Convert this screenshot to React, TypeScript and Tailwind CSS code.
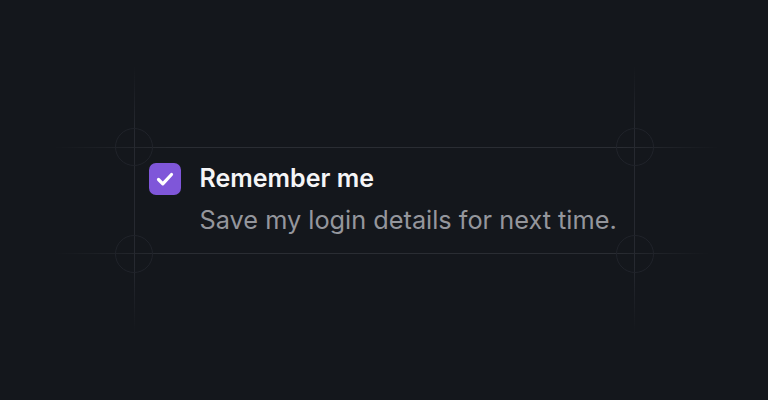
import React from "react";

export default function App() {
  return (
    <div
      className="w-[768px] h-[400px] bg-[#14171c] flex items-center justify-center overflow-hidden"
      style={{ fontFamily: "Inter, 'Noto Sans', sans-serif" }}
    >
      <div className="relative">
        {/* decorative guide lines */}
        <div className="pointer-events-none absolute left-[-80px] right-[-85px] top-0 h-px bg-[linear-gradient(to_right,transparent,#2a2d33_18%,#2a2d33_85%,transparent)]" />
        <div className="pointer-events-none absolute left-[-80px] right-[-75px] bottom-0 h-px bg-[linear-gradient(to_right,transparent,#2a2d33_18%,#2a2d33_85%,transparent)]" />
        <div className="pointer-events-none absolute top-[-82px] bottom-[-78px] left-0 w-px bg-[linear-gradient(to_bottom,transparent,#262930_25%,#262930_75%,transparent)]" />
        <div className="pointer-events-none absolute top-[-82px] bottom-[-78px] right-0 w-px bg-[linear-gradient(to_bottom,transparent,#262930_25%,#262930_75%,transparent)]" />
        <div className="pointer-events-none absolute left-[-19px] top-[-19px] w-[38px] h-[38px] rounded-full border border-[#20232a]" />
        <div className="pointer-events-none absolute right-[-19px] top-[-19px] w-[38px] h-[38px] rounded-full border border-[#20232a]" />
        <div className="pointer-events-none absolute left-[-19px] bottom-[-19px] w-[38px] h-[38px] rounded-full border border-[#20232a]" />
        <div className="pointer-events-none absolute right-[-19px] bottom-[-19px] w-[38px] h-[38px] rounded-full border border-[#20232a]" />

        <div className="relative flex items-start gap-[19px] w-[501px] h-[107px] pt-[16px] pl-[15px]">
          <div className="w-[32px] h-[32px] shrink-0 rounded-[7px] bg-[#7f56d9] flex items-center justify-center">
            <svg width="32" height="32" viewBox="0 0 32 32" fill="none">
              <path
                d="M9.5 16.5 L13.8 20.8 L22.5 11.5"
                stroke="white"
                strokeWidth="3.2"
                strokeLinecap="round"
                strokeLinejoin="round"
              />
            </svg>
          </div>
          <div className="flex flex-col">
            <div className="text-[25px] leading-[30px] font-semibold text-[#f5f5f6] whitespace-nowrap">
              Remember me
            </div>
            <div className="text-[25.3px] leading-[32px] mt-[11px] text-[#94969c] whitespace-nowrap">
              Save my login details for next time.
            </div>
          </div>
        </div>
      </div>
    </div>
  );
}
